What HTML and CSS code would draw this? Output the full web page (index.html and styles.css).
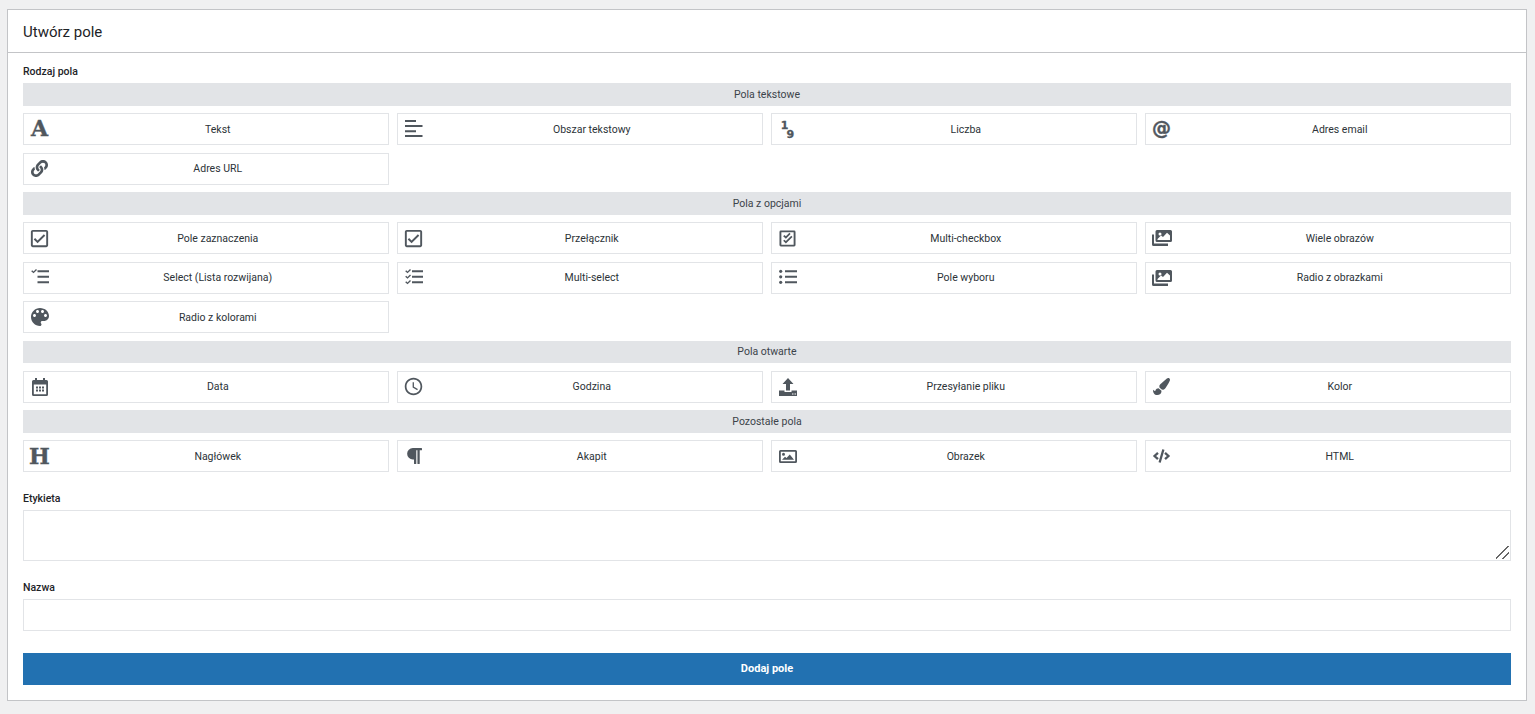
FILE: index.html
```html
<!DOCTYPE html>
<html lang="pl">
<head>
    <meta charset="UTF-8">
    <meta name="viewport" content="width=device-width, initial-scale=1.0">
    <title>Utwórz pole</title>
    <link rel="stylesheet" href="styles.css">
</head>
<body>
    <svg class="defs" aria-hidden="true">
        <symbol id="i-lines" viewBox="0 0 18 18"><path d="M0 0h11v2H0zM0 5h17.500v2H0zM0 10.300h11v2H0zM0 15h17.500v2H0z"/></symbol>
        <symbol id="i-link" viewBox="0 0 512 512"><path d="M326.612 185.391c59.747 59.809 58.927 155.698.36 214.59-.11.12-.24.25-.36.37l-67.2 67.2c-59.27 59.27-155.699 59.262-214.96 0-59.27-59.26-59.27-155.7 0-214.96l37.106-37.106c9.84-9.84 26.786-3.3 27.294 10.606.648 17.722 3.826 35.527 9.69 52.721 1.986 5.822.567 12.262-3.783 16.612l-13.087 13.087c-28.026 28.026-28.905 73.66-1.155 101.96 28.024 28.579 74.086 28.749 102.325.51l67.2-67.19c28.191-28.191 28.073-73.757 0-101.83-3.701-3.694-7.429-6.564-10.341-8.569a16.037 16.037 0 0 1-6.947-12.606c-.396-10.567 3.348-21.456 11.698-29.806l21.054-21.055c5.521-5.521 14.182-6.199 20.584-1.731a152.482 152.482 0 0 1 20.522 17.197zM467.547 44.449c-59.261-59.262-155.69-59.27-214.96 0l-67.2 67.2c-.12.12-.25.25-.36.37-58.566 58.892-59.387 154.781.36 214.59a152.454 152.454 0 0 0 20.521 17.196c6.402 4.468 15.064 3.789 20.584-1.731l21.054-21.055c8.35-8.35 12.094-19.239 11.698-29.806a16.037 16.037 0 0 0-6.947-12.606c-2.912-2.005-6.64-4.875-10.341-8.569-28.073-28.073-28.191-73.639 0-101.83l67.2-67.19c28.239-28.239 74.3-28.069 102.325.51 27.75 28.3 26.872 73.934-1.155 101.96l-13.087 13.087c-4.35 4.35-5.769 10.79-3.783 16.612 5.864 17.194 9.042 34.999 9.69 52.721.509 13.906 17.454 20.446 27.294 10.606l37.106-37.106c59.271-59.259 59.271-155.699.001-214.959z"/></symbol>
        <symbol id="i-check" viewBox="0 0 24 24"><path d="M19 3H5c-1.100 0-2 .9-2 2v14c0 1.100.9 2 2 2h14c1.100 0 2-.9 2-2V5c0-1.100-.9-2-2-2zm0 16H5V5h14v14zM17.990 9l-1.410-1.420-6.590 6.590-2.580-2.570-1.420 1.410 4 3.990z"/></symbol>
        <symbol id="i-multicheck" viewBox="0 0 18 18"><path fill-rule="evenodd" d="M2 .5h14A1.500 1.500 0 0 1 17.500 2v14a1.500 1.500 0 0 1-1.500 1.500H2A1.500 1.500 0 0 1 .5 16V2A1.500 1.500 0 0 1 2 .5zM2.500 2.500v13h13v-13z"/><path d="M7.300 9.300L4.400 6.500l1.300-1.300 1.600 1.500L11 3l1.300 1.300zM7.300 14.300l-2.900-2.800 1.300-1.300 1.600 1.500 5.700-5.600 1.300 1.300z"/></symbol>
        <symbol id="i-images" viewBox="0 0 20 16"><path fill-rule="evenodd" d="M5 0h13.500A1.500 1.500 0 0 1 20 1.500v9a1.500 1.500 0 0 1-1.500 1.500H5a1.500 1.500 0 0 1-1.500-1.500v-9A1.500 1.500 0 0 1 5 0zM5.500 2v8h12.500V5.500l-3-2.800-4 4.300-2-1.600L5.500 9V2zM8 2.500a1.500 1.500 0 1 0 0 3 1.500 1.500 0 0 0 0-3z"/><path d="M0 4.500h2v9h14V16H1.500A1.500 1.500 0 0 1 0 14.500z"/></symbol>
        <symbol id="i-select" viewBox="0 0 18 18"><path d="M.2 2.200l1-.9 1.300 1.200L5 .1l1 .9-3.500 3.200zM6.500 1.300H18v2H6.500zM6.500 6.800H18v2H6.500zM6.500 12.300H18v2H6.500z"/></symbol>
        <symbol id="i-multiselect" viewBox="0 0 18 18"><path d="M.2 2.200l1-.9 1.300 1.200L5 .1l1 .9-3.500 3.200zM.2 7.700l1-.9 1.300 1.200L5 5.600l1 .9-3.500 3.200zM.2 13.200l1-.9 1.300 1.200L5 11.100l1 .9-3.500 3.200zM7 1.300h11v2H7zM7 6.800h11v2H7zM7 12.300h11v2H7z"/></symbol>
        <symbol id="i-list" viewBox="0 0 18 18"><circle cx="1.700" cy="2.300" r="1.600"/><circle cx="1.700" cy="7.800" r="1.600"/><circle cx="1.700" cy="13.300" r="1.600"/><path d="M6 1.300h12v2H6zM6 6.800h12v2H6zM6 12.300h12v2H6z"/></symbol>
        <symbol id="i-palette" viewBox="0 0 24 24"><path d="M12 3c-4.970 0-9 4.030-9 9s4.030 9 9 9c.83 0 1.500-.67 1.500-1.500 0-.39-.15-.74-.39-1.010-.23-.26-.38-.61-.38-.99 0-.83.67-1.500 1.500-1.500H16c2.760 0 5-2.240 5-5 0-4.420-4.030-8-9-8zm-5.500 9c-.83 0-1.500-.67-1.500-1.500S5.670 9 6.500 9 8 9.670 8 10.500 7.330 12 6.500 12zm3-4C8.670 8 8 7.330 8 6.500S8.670 5 9.500 5s1.500.67 1.500 1.500S10.330 8 9.500 8zm5 0c-.83 0-1.500-.67-1.500-1.500S13.670 5 14.500 5s1.500.67 1.500 1.500S15.330 8 14.500 8zm3 4c-.83 0-1.500-.67-1.500-1.500S16.670 9 17.500 9s1.500.67 1.500 1.500-.67 1.500-1.500 1.500z"/></symbol>
        <symbol id="i-calendar" viewBox="0 0 16 18"><path fill-rule="evenodd" d="M3 0h2v2h6V0h2v2h1.500A1.500 1.500 0 0 1 16 3.500v13a1.500 1.500 0 0 1-1.500 1.500h-13A1.500 1.500 0 0 1 0 16.500v-13A1.500 1.500 0 0 1 1.500 2H3zM1.800 6.500v9.700h12.400V6.500z"/><path d="M4 8.500h2v2H4zM7 8.500h2v2H7zM10 8.500h2v2h-2zM4 11.500h2v2H4zM7 11.500h2v2H7zM10 11.500h2v2h-2z"/></symbol>
        <symbol id="i-clock" viewBox="0 0 24 24"><path d="M11.990 2C6.470 2 2 6.480 2 12s4.470 10 9.990 10C17.520 22 22 17.520 22 12S17.520 2 11.990 2zM12 20c-4.420 0-8-3.580-8-8s3.580-8 8-8 8 3.580 8 8-3.580 8-8 8zm.5-13H11v6l5.250 3.150.75-1.230-4.500-2.670z"/></symbol>
        <symbol id="i-upload" viewBox="0 0 18 18"><path d="M9 0l5.500 6H11v6.500H7V6H3.500z"/><path fill-rule="evenodd" d="M0 12.500h5.500v1.500h7v-1.500H18V18H0zM13 15.500v1h1.500v-1zM15.500 15.500v1H17v-1z"/></symbol>
        <symbol id="i-brush" viewBox="0 0 512 512"><path d="M167.020 309.340c-40.120 2.580-76.530 17.860-97.190 72.300-2.350 6.210-8 9.980-14.590 9.980-11.110 0-45.460-27.670-55.250-34.350C0 439.620 37.930 512 128 512c75.860 0 128-43.770 128-120.190 0-3.110-.65-6.080-.97-9.130l-88.010-73.340zM457.890 0c-15.160 0-29.370 6.710-40.210 16.450C213.270 199.050 192 203.340 192 257.090c0 13.700 3.250 26.760 8.730 38.700l63.820 53.180c7.210 1.800 14.640 3.030 22.390 3.030 62.110 0 98.110-45.470 211.160-256.460 7.380-14.350 13.900-29.850 13.900-45.990C512 20.640 486 0 457.890 0z"/></symbol>
        <symbol id="i-para" viewBox="0 32 448 448"><path d="M448 48v32a16 16 0 0 1-16 16h-48v368a16 16 0 0 1-16 16h-32a16 16 0 0 1-16-16V96h-32v368a16 16 0 0 1-16 16h-32a16 16 0 0 1-16-16V352h-32a160 160 0 0 1 0-320h240a16 16 0 0 1 16 16z"/></symbol>
        <symbol id="i-image" viewBox="0 0 18 13"><path fill-rule="evenodd" d="M1.500 0h15A1.500 1.500 0 0 1 18 1.500v10a1.500 1.500 0 0 1-1.500 1.500h-15A1.500 1.500 0 0 1 0 11.500v-10A1.500 1.500 0 0 1 1.500 0zM1.800 1.800v9.400h14.400V1.800zM3 9.800l3-3 1.500 1.300 3.300-3.600 4.200 5.300zM4.500 2.800a1.500 1.500 0 1 1 0 3 1.500 1.500 0 0 1 0-3z"/></symbol>
        <symbol id="i-code" viewBox="0 0 640 512"><path d="M278.900 511.500l-61-17.700c-6.400-1.800-10-8.500-8.200-14.900L346.200 8.700c1.800-6.400 8.500-10 14.900-8.200l61 17.700c6.400 1.800 10 8.500 8.200 14.900L293.800 503.300c-1.900 6.400-8.500 10.100-14.900 8.200zm-114-112.200l43.500-46.400c4.600-4.900 4.300-12.700-.8-17.200L117 256l90.600-79.700c5.100-4.500 5.500-12.300.8-17.200l-43.500-46.400c-4.500-4.800-12.100-5.100-17-.5L3.800 247.200c-5.100 4.700-5.100 12.800 0 17.500l144.100 135.100c4.900 4.600 12.500 4.400 17-.5zm327.200.6l144.100-135.100c5.100-4.700 5.100-12.800 0-17.500L492.100 112.100c-4.800-4.500-12.400-4.300-17 .5L431.600 159c-4.600 4.900-4.300 12.700.8 17.200L523 256l-90.600 79.700c-5.100 4.500-5.500 12.300-.8 17.200l43.500 46.400c4.500 4.900 12.100 5.100 17 .6z"/></symbol>
    </svg>

    <main class="panel">
        <h2 class="panel-title">Utwórz pole</h2>
        <form class="panel-body">
            <label class="field-label">Rodzaj pola</label>
            <div class="types">
                <div class="type-head">Pola tekstowe</div>
                <div class="type-grid">
                    <button type="button" class="type-btn"><span class="type-icon"><span class="glyph glyph-a">A</span></span><span class="type-name">Tekst</span></button>
                    <button type="button" class="type-btn"><span class="type-icon"><svg class="ic-lines"><use href="#i-lines"/></svg></span><span class="type-name">Obszar tekstowy</span></button>
                    <button type="button" class="type-btn"><span class="type-icon"><span class="glyph glyph-num"><span>1</span><span class="num-low">9</span></span></span><span class="type-name">Liczba</span></button>
                    <button type="button" class="type-btn"><span class="type-icon"><span class="glyph glyph-at">@</span></span><span class="type-name">Adres email</span></button>
                    <button type="button" class="type-btn"><span class="type-icon"><svg class="ic-17"><use href="#i-link"/></svg></span><span class="type-name">Adres URL</span></button>
                </div>

                <div class="type-head">Pola z opcjami</div>
                <div class="type-grid">
                    <button type="button" class="type-btn"><span class="type-icon"><svg class="ic-23"><use href="#i-check"/></svg></span><span class="type-name">Pole zaznaczenia</span></button>
                    <button type="button" class="type-btn"><span class="type-icon"><svg class="ic-23"><use href="#i-check"/></svg></span><span class="type-name">Przełącznik</span></button>
                    <button type="button" class="type-btn"><span class="type-icon"><svg class="ic-17"><use href="#i-multicheck"/></svg></span><span class="type-name">Multi-checkbox</span></button>
                    <button type="button" class="type-btn"><span class="type-icon"><svg class="ic-images"><use href="#i-images"/></svg></span><span class="type-name">Wiele obrazów</span></button>
                    <button type="button" class="type-btn"><span class="type-icon"><svg class="ic-18"><use href="#i-select"/></svg></span><span class="type-name">Select (Lista rozwijana)</span></button>
                    <button type="button" class="type-btn"><span class="type-icon"><svg class="ic-18"><use href="#i-multiselect"/></svg></span><span class="type-name">Multi-select</span></button>
                    <button type="button" class="type-btn"><span class="type-icon"><svg class="ic-18"><use href="#i-list"/></svg></span><span class="type-name">Pole wyboru</span></button>
                    <button type="button" class="type-btn"><span class="type-icon"><svg class="ic-images"><use href="#i-images"/></svg></span><span class="type-name">Radio z obrazkami</span></button>
                    <button type="button" class="type-btn"><span class="type-icon"><svg class="ic-24"><use href="#i-palette"/></svg></span><span class="type-name">Radio z kolorami</span></button>
                </div>

                <div class="type-head">Pola otwarte</div>
                <div class="type-grid">
                    <button type="button" class="type-btn"><span class="type-icon"><svg class="ic-cal"><use href="#i-calendar"/></svg></span><span class="type-name">Data</span></button>
                    <button type="button" class="type-btn"><span class="type-icon"><svg class="ic-21"><use href="#i-clock"/></svg></span><span class="type-name">Godzina</span></button>
                    <button type="button" class="type-btn"><span class="type-icon"><svg class="ic-18"><use href="#i-upload"/></svg></span><span class="type-name">Przesyłanie pliku</span></button>
                    <button type="button" class="type-btn"><span class="type-icon"><svg class="ic-17"><use href="#i-brush"/></svg></span><span class="type-name">Kolor</span></button>
                </div>

                <div class="type-head">Pozostałe pola</div>
                <div class="type-grid">
                    <button type="button" class="type-btn"><span class="type-icon"><span class="glyph glyph-h">H</span></span><span class="type-name">Nagłówek</span></button>
                    <button type="button" class="type-btn"><span class="type-icon"><svg class="ic-16"><use href="#i-para"/></svg></span><span class="type-name">Akapit</span></button>
                    <button type="button" class="type-btn"><span class="type-icon"><svg class="ic-image"><use href="#i-image"/></svg></span><span class="type-name">Obrazek</span></button>
                    <button type="button" class="type-btn"><span class="type-icon"><svg class="ic-code"><use href="#i-code"/></svg></span><span class="type-name">HTML</span></button>
                </div>
            </div>

            <label class="field-label label-etykieta" for="etykieta">Etykieta</label>
            <textarea class="field-input field-area" id="etykieta"></textarea>

            <label class="field-label label-nazwa" for="nazwa">Nazwa</label>
            <input class="field-input field-text" id="nazwa" type="text">

            <button type="submit" class="submit-btn">Dodaj pole</button>
        </form>
    </main>
</body>
</html>
```

FILE: styles.css
```css
* {
    box-sizing: border-box;
}

body {
    margin: 0;
    padding: 9px 8px 13px 7px;
    background-color: #f0f0f1;
    color: #2c3338;
    font-family: Roboto, "Open Sans", sans-serif;
    font-size: 10.5px;
}

.defs {
    display: none;
}

.panel {
    background-color: #fff;
    border: 1px solid #c3c4c7;
}

.panel-title {
    margin: 0;
    height: 43px;
    padding: 1px 15px 0;
    display: flex;
    align-items: center;
    border-bottom: 1px solid #c3c4c7;
    color: #1d2327;
    font-size: 15px;
    font-weight: 400;
}

.panel-body {
    display: flex;
    flex-direction: column;
    padding: 12px 15px 15px;
}

.field-label {
    display: block;
    height: 18px;
    color: #1d2327;
    font-size: 10.5px;
    font-weight: 500;
    line-height: 14px;
}

.types {
    display: flex;
    flex-direction: column;
    gap: 7.5px;
}

.type-head {
    height: 22.5px;
    background-color: #e2e4e7;
    display: flex;
    align-items: center;
    justify-content: center;
    color: #3c434a;
}

.type-grid {
    display: grid;
    grid-template-columns: repeat(4, 1fr);
    gap: 7.5px 8px;
}

.type-btn {
    height: 32px;
    padding: 0 0 0 7.5px;
    display: flex;
    align-items: center;
    background-color: #fff;
    border: 1px solid #e2e4e7;
    color: #2c3338;
    font: inherit;
}

.type-icon {
    flex: none;
    width: 16px;
    height: 16px;
    display: flex;
    align-items: center;
    justify-content: center;
    color: #50575e;
}

.type-icon svg {
    flex: none;
    fill: currentColor;
}

.type-name {
    flex: 1;
    text-align: center;
}

.ic-16 { width: 16px; height: 16px; }
.ic-17 { width: 17px; height: 17px; }
.ic-18 { width: 18px; height: 18px; }
.ic-21 { width: 21px; height: 21px; }
.ic-23 { width: 23px; height: 23px; }
.ic-24 { width: 24px; height: 24px; }
.ic-lines { width: 18px; height: 18px; }
.ic-images { width: 20px; height: 16px; }
.ic-cal { width: 16px; height: 18px; }
.ic-image { width: 18px; height: 13px; }
.ic-code { width: 17px; height: 14px; }

.glyph {
    flex: none;
    font-family: "DejaVu Serif", serif;
    font-weight: 700;
    line-height: 1;
    -webkit-text-stroke: 0.4px currentColor;
}

.glyph-a {
    margin-bottom: 3px;
    font-size: 22px;
}

.glyph-h {
    font-size: 22px;
}

.glyph-at {
    margin-bottom: 2px;
    font-family: "DejaVu Sans", sans-serif;
    font-size: 19px;
}

.glyph-num {
    display: flex;
    align-items: flex-start;
    height: 18px;
    font-family: "DejaVu Sans", sans-serif;
    font-size: 11px;
    -webkit-text-stroke: 0.3px currentColor;
}

.num-low {
    margin-top: 9px;
    margin-left: -2px;
}

.label-etykieta {
    margin-top: 20px;
}

.field-input {
    display: block;
    width: 100%;
    background-color: #fff;
    border: 1px solid #e2e4e7;
    border-radius: 0;
    outline: none;
}

.field-area {
    height: 51px;
}

.field-area::-webkit-resizer {
    background: linear-gradient(135deg, transparent 44%, #666 44%, #666 52%, transparent 52%, transparent 70%, #666 70%, #666 78%, transparent 78%) right 1px bottom 1px / 13px 13px no-repeat;
}

.label-nazwa {
    margin-top: 20px;
}

.field-text {
    height: 32px;
}

.submit-btn {
    margin-top: 22px;
    height: 32px;
    padding: 0 0 1px;
    background-color: #2271b1;
    border: none;
    color: #fff;
    font: inherit;
    font-size: 11px;
    font-weight: 700;
}
```
